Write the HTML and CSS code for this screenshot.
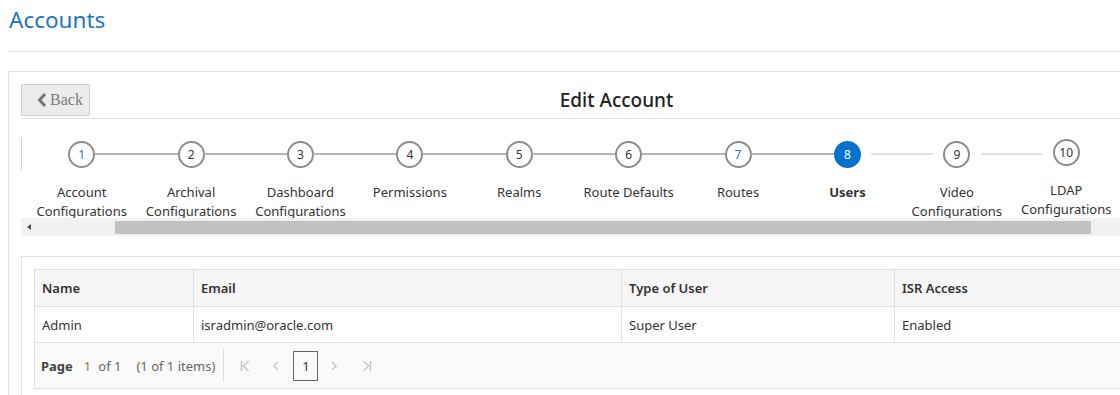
FILE: index.html
```html
<!DOCTYPE html>
<html lang="en">
<head>
    <meta charset="UTF-8">
    <meta name="viewport" content="width=device-width, initial-scale=1.0">
    <title>Accounts - Edit Account</title>

    <link rel="stylesheet" href="styles.css">

</head>
<body>
    <div class="page">

        <div class="page-header">
            <h1>Accounts</h1>
        </div>

        <div class="panel">

            <div class="panel-head">
                <button class="btn-back" type="button">
                    <svg width="10" height="14" viewBox="0 0 10 14"><path d="M8 1 L2.5 7 L8 13" fill="none" stroke="#777" stroke-width="3"/></svg>
                    Back
                </button>
                <h2>Edit Account</h2>
            </div>

            <div class="train">
                <div class="train-edge"></div>
                <ol class="steps">
                    <li class="step visited"><span class="circle blue">1</span><span class="label">Account Configurations</span></li>
                    <li class="step visited"><span class="circle">2</span><span class="label">Archival Configurations</span></li>
                    <li class="step visited"><span class="circle">3</span><span class="label">Dashboard Configurations</span></li>
                    <li class="step visited"><span class="circle">4</span><span class="label">Permissions</span></li>
                    <li class="step visited"><span class="circle">5</span><span class="label">Realms</span></li>
                    <li class="step visited"><span class="circle">6</span><span class="label">Route Defaults</span></li>
                    <li class="step visited"><span class="circle blue">7</span><span class="label">Routes</span></li>
                    <li class="step current"><span class="circle">8</span><span class="label">Users</span></li>
                    <li class="step"><span class="circle">9</span><span class="label">Video Configurations</span></li>
                    <li class="step last"><span class="circle">10</span><span class="label">LDAP Configurations</span></li>
                </ol>
            </div>

            <div class="hscroll">
                <span class="hscroll-arrow"></span>
                <span class="hscroll-thumb"></span>
            </div>

            <div class="section">
                <table class="grid">
                    <colgroup>
                        <col style="width: 159px">
                        <col style="width: 428px">
                        <col style="width: 273px">
                        <col>
                    </colgroup>
                    <thead>
                        <tr>
                            <th>Name</th>
                            <th>Email</th>
                            <th>Type of User</th>
                            <th>ISR Access</th>
                        </tr>
                    </thead>
                    <tbody>
                        <tr>
                            <td>Admin</td>
                            <td>isradmin@oracle.com</td>
                            <td>Super User</td>
                            <td>Enabled</td>
                        </tr>
                    </tbody>
                </table>

                <div class="pager">
                    <div class="pager-info">
                        <b>Page</b>
                        <span class="pager-current">1</span>
                        <span>of 1</span>
                        <span class="pager-items">(1 of 1 items)</span>
                    </div>
                    <div class="pager-nav">
                        <span class="pager-btn first">
                            <svg width="10" height="12" viewBox="0 0 10 12"><path d="M1.5 1 V11 M8.5 1 L3.5 6 L8.5 11" fill="none" stroke="#c8c8c8" stroke-width="1.6"/></svg>
                        </span>
                        <span class="pager-btn prev">
                            <svg width="8" height="12" viewBox="0 0 8 12"><path d="M6 2 L2 6 L6 10" fill="none" stroke="#c8c8c8" stroke-width="1.6"/></svg>
                        </span>
                        <span class="pager-page">1</span>
                        <span class="pager-btn next">
                            <svg width="8" height="12" viewBox="0 0 8 12"><path d="M2 2 L6 6 L2 10" fill="none" stroke="#c8c8c8" stroke-width="1.6"/></svg>
                        </span>
                        <span class="pager-btn last">
                            <svg width="10" height="12" viewBox="0 0 10 12"><path d="M1.5 1 L6.5 6 L1.5 11 M8.5 1 V11" fill="none" stroke="#c8c8c8" stroke-width="1.6"/></svg>
                        </span>
                    </div>
                </div>
            </div>

        </div>

    </div>
</body>
</html>
```

FILE: styles.css
```css
* {
    margin: 0;
    padding: 0;
    box-sizing: border-box;
}

body {
    font-family: "Noto Sans", "Open Sans", sans-serif;
    font-size: 13px;
    color: #333;
    background-color: #fff;
    overflow: hidden;
}

.page {
    width: 1170px;
    padding: 0 8px;
}

.page-header {
    border-bottom: 1px solid #e0e0e0;
    padding: 5px 1px 16px;
}

.page-header h1 {
    font-size: 22.5px;
    font-weight: 400;
    line-height: 30px;
    color: #1c73c9;
}

.panel {
    margin-top: 19px;
    border: 1px solid #e0e0e0;
    padding: 12px 12px 0;
}

.panel-head {
    display: flex;
    align-items: center;
    border-bottom: 1px solid #e0e0e0;
    padding-bottom: 2px;
}

.btn-back {
    display: flex;
    align-items: center;
    gap: 3px;
    width: 69px;
    height: 32px;
    padding-left: 15px;
    background-color: #ececec;
    border: 1px solid #cfcfcf;
    border-radius: 2px;
    font-family: "Liberation Serif", serif;
    font-size: 16px;
    color: #7a7a7a;
}

.panel-head h2 {
    flex: 1;
    text-align: center;
    font-size: 19px;
    font-weight: 500;
    color: #222;
    padding-right: 6px;
}

.train {
    display: flex;
    margin-top: 19px;
}

.train-edge {
    width: 1px;
    height: 32px;
    background-color: #d0d0d0;
    margin-right: 5px;
}

.steps {
    display: flex;
    list-style: none;
}

.step {
    position: relative;
    width: 109.4px;
    display: flex;
    flex-direction: column;
    align-items: center;
    padding-top: 3px;
}

.step::after {
    content: "";
    position: absolute;
    top: 15px;
    left: calc(50% + 13px);
    width: calc(100% - 26px);
    height: 2px;
    background-color: #b4b4b4;
}

.step.current::after,
.step:not(.visited)::after {
    left: calc(50% + 24px);
    width: calc(100% - 48px);
    background-color: #e2e2e2;
}

.step.last::after {
    display: none;
}

.step.last {
    margin-top: -2px;
}

.circle {
    width: 27px;
    height: 27px;
    border: 2px solid #8c8c8c;
    border-radius: 50%;
    display: flex;
    align-items: center;
    justify-content: center;
    font-size: 12px;
    color: #333;
    background-color: #fff;
}

.circle.blue {
    color: #1c73c9;
}

.step.current .circle {
    background-color: #0572ce;
    border-color: #0572ce;
    color: #fff;
}

.label {
    margin-top: 15px;
    text-align: center;
    line-height: 18.5px;
    color: #333;
}

.step.current .label {
    font-weight: 700;
}

.hscroll {
    position: relative;
    height: 18px;
    background-color: #f1f1f1;
    margin-top: -2px;
}

.hscroll-arrow {
    position: absolute;
    left: 6px;
    top: 6px;
    border-top: 3px solid transparent;
    border-bottom: 3px solid transparent;
    border-right: 4px solid #505050;
}

.hscroll-thumb {
    position: absolute;
    left: 94px;
    top: 3px;
    width: 976px;
    height: 13px;
    background-color: #c1c1c1;
}

.section {
    margin-top: 20px;
    border: 1px solid #e0e0e0;
    border-bottom: none;
    padding: 12px 12px 20px;
}

.grid {
    width: 100%;
    table-layout: fixed;
    border-collapse: collapse;
    border: 1px solid #e0e0e0;
    border-bottom: none;
}

.grid th,
.grid td {
    text-align: left;
    padding: 0 7px;
    border-left: 1px solid #e0e0e0;
    border-bottom: 1px solid #e0e0e0;
    white-space: nowrap;
}

.grid th {
    height: 37px;
    background-color: #f6f6f6;
    font-weight: 600;
    color: #333;
}

.grid td {
    height: 36px;
}

.pager {
    display: flex;
    align-items: center;
    height: 46px;
    background-color: #fafafa;
    border: 1px solid #e0e0e0;
    border-top: none;
    padding-left: 6px;
}

.pager-info {
    display: flex;
    gap: 7px;
    color: #666;
    padding-right: 8px;
}

.pager-info b {
    color: #444;
    margin-right: 4px;
}

.pager-current {
    color: #8a7650;
}

.pager-items {
    margin-left: 8px;
}

.pager-nav {
    display: flex;
    align-items: center;
    border-left: 1px solid #dcdcdc;
    height: 33px;
    padding-left: 16px;
}

.pager-btn {
    display: flex;
}

.pager-btn.first {
    margin-right: 22px;
}

.pager-btn.prev {
    margin-right: 13px;
}

.pager-btn.next {
    margin-left: 12px;
    margin-right: 24px;
}

.pager-page {
    width: 25px;
    height: 30px;
    border: 1px solid #666;
    display: flex;
    align-items: center;
    justify-content: center;
    color: #333;
}
```
